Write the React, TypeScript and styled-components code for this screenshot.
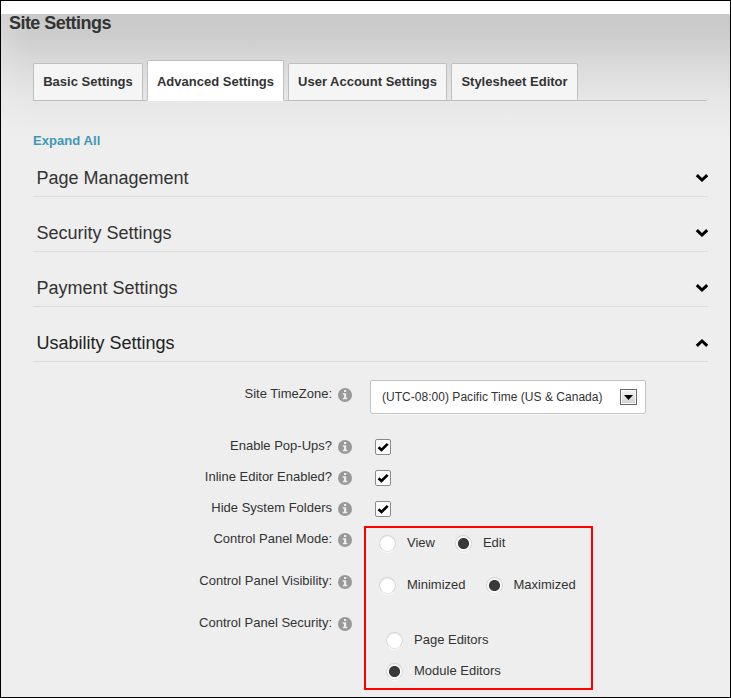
import React from "react";
import styled, { createGlobalStyle } from "styled-components";

const GlobalStyle = createGlobalStyle`
  * { box-sizing: border-box; }
  body { margin: 0; background: #fff; }
`;

const Frame = styled.div`
  width: 731px;
  height: 698px;
  border: 1px solid #000;
  padding-top: 13px;
  background: #fff;
  font-family: "Liberation Sans", Arial, sans-serif;
  font-size: 13px;
  line-height: 16px;
  color: #333;
  overflow: hidden;
`;

const Page = styled.main`
  height: 683px;
  background:
    linear-gradient(90deg, rgba(238, 238, 238, 0.3), rgba(238, 238, 238, 0) 28px),
    linear-gradient(#c9c9c9 0px, #cdcdcd 22px, #d8d8d8 46px, #e6e6e6 82px, #ececec 112px, #eee 132px);
`;

const Title = styled.h1`
  margin: 0;
  padding-left: 8px;
  height: 46px;
  font-size: 18px;
  line-height: 18px;
  letter-spacing: -0.55px;
`;

const Body = styled.div`
  margin: 0 22px 0 32px;
`;

const Tabs = styled.nav`
  display: flex;
  align-items: flex-end;
  gap: 4px;
  height: 41px;
  border-bottom: 1px solid #bfbfbf;
  border-bottom-right-radius: 3px;
`;

const Tab = styled.button<{ $width: number; $active?: boolean }>`
  width: ${(p) => p.$width}px;
  height: ${(p) => (p.$active ? 41 : 38)}px;
  margin: 0 0 -1px;
  padding: ${(p) => (p.$active ? "2px" : "0")} 0 0;
  border: 1px solid #bfbfbf;
  border-bottom-color: ${(p) => (p.$active ? "#fff" : "#bfbfbf")};
  border-radius: 2px 2px 0 0;
  background: ${(p) => (p.$active ? "#fff" : "#f5f5f5")};
  color: #333;
  font: bold 13px/16px "Liberation Sans", Arial, sans-serif;
  white-space: nowrap;
`;

const ExpandAll = styled.a`
  display: block;
  width: fit-content;
  margin-top: 32px;
  color: #3f97b6;
  font-weight: bold;
  letter-spacing: 0.07px;
`;

const SectionHeader = styled.h2<{ $open?: boolean }>`
  display: flex;
  align-items: center;
  justify-content: space-between;
  margin: 0;
  height: 55px;
  padding: 18px 0 0 3.5px;
  border-bottom: 1px solid #dbdbdb;
  color: ${(p) => (p.$open ? "#222" : "#333")};
  font-size: 18px;
  font-weight: normal;
  line-height: 22px;
  &:first-child { height: 48px; padding-top: 11px; }
`;

const Form = styled.form`
  display: grid;
  grid-template-columns: 319px 1fr;
  grid-template-rows: 52px 31px 31px 24px auto;
  padding-top: 15px;
`;

const LabelCell = styled.div`
  display: flex;
  justify-content: flex-end;
  gap: 6px;
  height: 24px;
  padding-top: 9px;
  svg { margin-top: 2px; flex: none; }
`;

const LabelStack = styled.div`
  display: grid;
  grid-template-rows: 42px 42px 42px;
  align-content: start;
  padding-top: 7px;
`;

const SelectBox = styled.div`
  display: flex;
  align-items: center;
  justify-content: space-between;
  width: 276px;
  height: 34px;
  margin: 3px 0 0 18px;
  padding: 0 8px 0 11px;
  border: 1px solid #c4c4c4;
  border-radius: 2px;
  background: #fff;
  box-shadow: 0 1px 0 #f8f8f8;
  font-size: 12px;
  letter-spacing: 0.03px;
`;

const DropButton = styled.span`
  display: grid;
  place-items: center;
  width: 17px;
  height: 16px;
  border: 1px solid #666;
  background: linear-gradient(#f5f5f5, #d0d0d0);
  box-shadow: inset 0 0 0 1px #fafafa;
`;

const CheckBox = styled.span`
  display: grid;
  place-items: center;
  width: 16px;
  height: 16px;
  margin: 10px 0 0 23px;
  border: 1px solid #8a8a8a;
  border-radius: 2px;
  background: #fff;
`;

const Highlight = styled.div`
  width: 229px;
  height: 164px;
  margin: 11px 0 0 12px;
  padding: 5px 0 0 13px;
  border: 2px solid #f00;
`;

const RadioRow = styled.div<{ $height: number; $indent?: boolean }>`
  display: flex;
  gap: 20px;
  height: ${(p) => p.$height}px;
  margin-left: ${(p) => (p.$indent ? 7 : 0)}px;
`;

const RadioLabel = styled.label`
  display: flex;
  height: 20px;
  gap: 11px;
  padding-top: 2px;
`;

const RadioDot = styled.span<{ $checked?: boolean }>`
  width: 17px;
  height: 17px;
  border: 1px solid #d4d4d4;
  border-bottom-color: #e2e2e2;
  border-radius: 50%;
  background: ${(p) => (p.$checked ? "radial-gradient(circle, #393939 5.1px, #fff 6px)" : "#fff")};
  box-shadow: 0 1px 0 #fafafa, inset 0 1px 1px #eee;
`;

const Chevron = ({ up }: { up?: boolean }) => (
  <svg width="13" height="10" viewBox="0 0 13 10" fill="none" stroke="#000" strokeWidth="3">
    <path d={up ? "M1.8 7.9 7 3 12.2 7.9" : "M1.8 2.1 7 7 12.2 2.1"} />
  </svg>
);

const InfoIcon = () => (
  <svg width="14" height="14" viewBox="0 0 14 14">
    <circle cx="7" cy="7" r="7" fill="#999" />
    <path fill="#eee" d="M6 2h2.2v2H6zM4.8 5.3h3.4v4.5h1.1v1.5H4.8V9.8H6v-3H4.8z" />
  </svg>
);

const Field = ({ text }: { text: string }) => (
  <LabelCell>
    <span>{text}</span>
    <InfoIcon />
  </LabelCell>
);

const Check = () => (
  <CheckBox role="checkbox" aria-checked="true">
    <svg width="12" height="10" viewBox="0 0 12 10">
      <path d="M1.5 5.2 4.5 8 10.7 1.9" fill="none" stroke="#000" strokeWidth="2.7" />
    </svg>
  </CheckBox>
);

const Radio = ({ text, checked }: { text: string; checked?: boolean }) => (
  <RadioLabel>
    <RadioDot $checked={checked} />
    <span>{text}</span>
  </RadioLabel>
);

const sections = ["Page Management", "Security Settings", "Payment Settings", "Usability Settings"];

export default function App() {
  return (
    <>
      <GlobalStyle />
      <Frame>
        <Page>
          <Title>Site Settings</Title>
          <Body>
            <Tabs>
              <Tab $width={110}>Basic Settings</Tab>
              <Tab $width={137} $active>Advanced Settings</Tab>
              <Tab $width={159}>User Account Settings</Tab>
              <Tab $width={127}>Stylesheet Editor</Tab>
            </Tabs>
            <ExpandAll>Expand All</ExpandAll>
            <section>
              {sections.map((name) => (
                <SectionHeader key={name} $open={name === "Usability Settings"}>
                  {name}
                  <Chevron up={name === "Usability Settings"} />
                </SectionHeader>
              ))}
            </section>
            <Form>
              <Field text="Site TimeZone:" />
              <SelectBox>
                (UTC-08:00) Pacific Time (US &amp; Canada)
                <DropButton>
                  <svg width="9" height="5" viewBox="0 0 9 5"><path d="M0 0h9L4.5 5z" /></svg>
                </DropButton>
              </SelectBox>
              <Field text="Enable Pop-Ups?" />
              <Check />
              <Field text="Inline Editor Enabled?" />
              <Check />
              <Field text="Hide System Folders" />
              <Check />
              <LabelStack>
                <Field text="Control Panel Mode:" />
                <Field text="Control Panel Visibility:" />
                <Field text="Control Panel Security:" />
              </LabelStack>
              <Highlight>
                <RadioRow $height={42}>
                  <Radio text="View" />
                  <Radio text="Edit" checked />
                </RadioRow>
                <RadioRow $height={55}>
                  <Radio text="Minimized" />
                  <Radio text="Maximized" checked />
                </RadioRow>
                <RadioRow $height={31} $indent>
                  <Radio text="Page Editors" />
                </RadioRow>
                <RadioRow $height={31} $indent>
                  <Radio text="Module Editors" checked />
                </RadioRow>
              </Highlight>
            </Form>
          </Body>
        </Page>
      </Frame>
    </>
  );
}
